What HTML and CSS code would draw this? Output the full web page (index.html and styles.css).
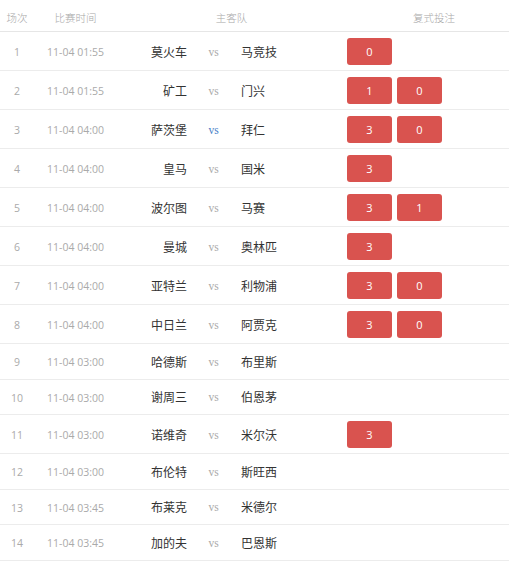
FILE: index.html
```html
<!DOCTYPE html>
<html lang="zh">
<head>
<meta charset="utf-8">
<title>复式投注</title>
<link rel="stylesheet" href="styles.css">
</head>
<body>
<div class="table">
  <div class="row head">
    <div class="c-no">场次</div>
    <div class="c-time">比赛时间</div>
    <div class="c-teams">主客队</div>
    <div class="c-bet-h">复式投注</div>
  </div>

  <div class="row tall">
    <div class="c-no num">1</div><div class="c-time num">11-04 01:55</div>
    <div class="home">莫火车</div><div class="vs">vs</div><div class="away">马竞技</div>
    <div class="bets"><span class="btn">0</span></div>
  </div>
  <div class="row tall">
    <div class="c-no num">2</div><div class="c-time num">11-04 01:55</div>
    <div class="home">矿工</div><div class="vs">vs</div><div class="away">门兴</div>
    <div class="bets"><span class="btn">1</span><span class="btn">0</span></div>
  </div>
  <div class="row tall">
    <div class="c-no num">3</div><div class="c-time num">11-04 04:00</div>
    <div class="home">萨茨堡</div><div class="vs blue">vs</div><div class="away">拜仁</div>
    <div class="bets"><span class="btn">3</span><span class="btn">0</span></div>
  </div>
  <div class="row tall">
    <div class="c-no num">4</div><div class="c-time num">11-04 04:00</div>
    <div class="home">皇马</div><div class="vs">vs</div><div class="away">国米</div>
    <div class="bets"><span class="btn">3</span></div>
  </div>
  <div class="row tall">
    <div class="c-no num">5</div><div class="c-time num">11-04 04:00</div>
    <div class="home">波尔图</div><div class="vs">vs</div><div class="away">马赛</div>
    <div class="bets"><span class="btn">3</span><span class="btn">1</span></div>
  </div>
  <div class="row tall">
    <div class="c-no num">6</div><div class="c-time num">11-04 04:00</div>
    <div class="home">曼城</div><div class="vs">vs</div><div class="away">奥林匹</div>
    <div class="bets"><span class="btn">3</span></div>
  </div>
  <div class="row tall">
    <div class="c-no num">7</div><div class="c-time num">11-04 04:00</div>
    <div class="home">亚特兰</div><div class="vs">vs</div><div class="away">利物浦</div>
    <div class="bets"><span class="btn">3</span><span class="btn">0</span></div>
  </div>
  <div class="row tall">
    <div class="c-no num">8</div><div class="c-time num">11-04 04:00</div>
    <div class="home">中日兰</div><div class="vs">vs</div><div class="away">阿贾克</div>
    <div class="bets"><span class="btn">3</span><span class="btn">0</span></div>
  </div>
  <div class="row">
    <div class="c-no num">9</div><div class="c-time num">11-04 03:00</div>
    <div class="home">哈德斯</div><div class="vs">vs</div><div class="away">布里斯</div>
    <div class="bets"></div>
  </div>
  <div class="row">
    <div class="c-no num">10</div><div class="c-time num">11-04 03:00</div>
    <div class="home">谢周三</div><div class="vs">vs</div><div class="away">伯恩茅</div>
    <div class="bets"></div>
  </div>
  <div class="row tall">
    <div class="c-no num">11</div><div class="c-time num">11-04 03:00</div>
    <div class="home">诺维奇</div><div class="vs">vs</div><div class="away">米尔沃</div>
    <div class="bets"><span class="btn">3</span></div>
  </div>
  <div class="row">
    <div class="c-no num">12</div><div class="c-time num">11-04 03:00</div>
    <div class="home">布伦特</div><div class="vs">vs</div><div class="away">斯旺西</div>
    <div class="bets"></div>
  </div>
  <div class="row">
    <div class="c-no num">13</div><div class="c-time num">11-04 03:45</div>
    <div class="home">布莱克</div><div class="vs">vs</div><div class="away">米德尔</div>
    <div class="bets"></div>
  </div>
  <div class="row">
    <div class="c-no num">14</div><div class="c-time num">11-04 03:45</div>
    <div class="home">加的夫</div><div class="vs">vs</div><div class="away">巴恩斯</div>
    <div class="bets"></div>
  </div>
</div>
</body>
</html>
```
FILE: styles.css
```css
html, body {
  margin: 0;
  padding: 0;
  background: #fff;
}
body {
  font-family: "Open Sans", "Noto Sans CJK SC", sans-serif;
  color: #333;
}
.table {
  width: 509px;
}
.row {
  display: grid;
  grid-template-columns: 34px 83px 80px 33px 116px 1fr;
  align-items: center;
  height: 35.5px;
  box-sizing: border-box;
  border-bottom: 1px solid #ececec;
}
.row.tall {
  height: 39px;
}
.row.head {
  height: 32px;
  padding-top: 3px;
  border-bottom: 1px solid #e6e6e6;
}
.head > div {
  font-family: "Noto Sans CJK SC", sans-serif;
  font-size: 10.5px;
  color: #a8a8a8;
  font-weight: 300;
}
.c-no, .c-time {
  text-align: center;
}
.c-teams {
  grid-column: 3 / 6;
  text-align: center;
}
.c-bet-h {
  text-align: center;
  padding-left: 13px;
}
.num {
  font-family: "Open Sans", sans-serif;
  font-size: 10.5px;
  color: #aaa;
  padding-top: 2px;
}
.home, .away {
  font-family: "Noto Sans CJK SC", sans-serif;
  font-size: 12px;
  color: #333;
}
.home {
  text-align: right;
  padding-right: 10px;
}
.away {
  padding-left: 11px;
}
.vs {
  font-family: "Liberation Serif", serif;
  font-size: 11.5px;
  color: #aaa;
  text-align: center;
  padding-top: 1px;
}
.vs.blue {
  color: #4a7fc8;
}
.bets {
  display: flex;
  gap: 5px;
  padding-left: 1px;
}
.btn {
  width: 45px;
  height: 27px;
  display: flex;
  align-items: center;
  justify-content: center;
  background: #d9534f;
  border-radius: 3px;
  color: #fff;
  font-family: "Open Sans", sans-serif;
  font-size: 11px;
}
```
